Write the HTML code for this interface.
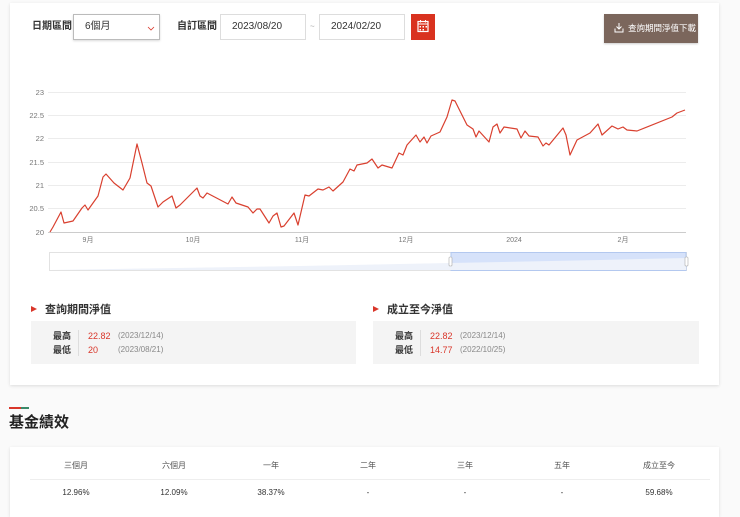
<!DOCTYPE html>
<html><head><meta charset="utf-8"><style>
body{margin:0;width:740px;height:510px;background:#fafafa;font-family:"Liberation Sans","Noto Sans CJK TC",sans-serif;position:relative;overflow:hidden;color:#333}
.abs{position:absolute}
.card{position:absolute;background:#fff;box-shadow:0 1px 3px rgba(0,0,0,.12);}
.lbl{font-size:10px;font-weight:bold;color:#333;line-height:14px}
.inp{position:absolute;border:1px solid #ddd;background:#fff;font-size:10px;line-height:24px;padding-left:11px;box-sizing:border-box;height:26px;color:#333}
.box{position:absolute;background:#f4f4f4;height:43px;top:321px}
.st{font-size:9px;line-height:14px}
.r{color:#d9362a}.g{color:#888}
.h{font-size:11px;font-weight:bold;line-height:14px}
.col{position:absolute;width:80px;text-align:center;font-size:8px;line-height:12px}
</style></head><body>
<div class="card" style="left:10px;top:3px;width:709px;height:382px"></div>
<div class="abs lbl" style="left:32px;top:20px">日期區間</div>
<div class="inp" style="left:73px;top:14px;width:87px;border-color:#bbb;box-shadow:0 1px 2px rgba(0,0,0,.15)">6個月<svg class="abs" style="left:73px;top:11px" width="8" height="6"><path d="M1 1L4 4L7 1" fill="none" stroke="#d9362a" stroke-width="0.8"/></svg></div>
<div class="abs lbl" style="left:177px;top:20px">自訂區間</div>
<div class="inp" style="left:220px;top:14px;width:86px">2023/08/20</div>
<div class="abs" style="left:310px;top:22px;font-size:8px;color:#aaa;line-height:10px">~</div>
<div class="inp" style="left:319px;top:14px;width:86px">2024/02/20</div>
<div class="abs" style="left:411px;top:14px;width:24px;height:26px;background:#d9321f">
<svg width="24" height="26"><rect x="7" y="7.5" width="10" height="10" fill="none" stroke="#fff" stroke-width="1.2"/><line x1="7" y1="10" x2="17" y2="10" stroke="#fff"/><line x1="9.5" y1="6" x2="9.5" y2="8.5" stroke="#fff"/><line x1="14.5" y1="6" x2="14.5" y2="8.5" stroke="#fff"/><g fill="#fff"><rect x="8.5" y="12" width="1.5" height="1.5"/><rect x="11.5" y="12" width="1.5" height="1.5"/><rect x="14.5" y="12" width="1.5" height="1.5"/><rect x="8.5" y="15" width="1.5" height="1.5"/><rect x="11.5" y="15" width="1.5" height="1.5"/></g></svg></div>
<div class="abs" style="left:604px;top:14px;width:94px;height:29px;background:#7b665c;color:#fff;font-size:8.5px;line-height:29px;box-shadow:0 1px 2px rgba(0,0,0,.2)">
<svg class="abs" style="left:9px;top:8px" width="12" height="12"><path d="M6 1V7M3.5 4.5L6 7L8.5 4.5M2 6.5V10H10V6.5" fill="none" stroke="#fff" stroke-width="1"/></svg><span style="position:absolute;left:24px">查詢期間淨值下載</span></div>

<svg class="abs" style="left:0;top:0" width="740" height="290">
<g stroke="#ececec" stroke-width="1"><line x1="48" y1="92.5" x2="686" y2="92.5"/><line x1="48" y1="115.5" x2="686" y2="115.5"/><line x1="48" y1="138.5" x2="686" y2="138.5"/><line x1="48" y1="162.5" x2="686" y2="162.5"/><line x1="48" y1="185.5" x2="686" y2="185.5"/><line x1="48" y1="208.5" x2="686" y2="208.5"/></g>
<line x1="48" y1="232.5" x2="686" y2="232.5" stroke="#ccc"/>
<g font-size="7.5" fill="#777" text-anchor="end" font-family="Liberation Sans"><text x="44" y="95">23</text><text x="44" y="118">22.5</text><text x="44" y="141">22</text><text x="44" y="165">21.5</text><text x="44" y="188">21</text><text x="44" y="211">20.5</text><text x="44" y="235">20</text></g>
<g font-size="7" fill="#777" text-anchor="middle" font-family="Liberation Sans,Noto Sans CJK TC"><text x="88" y="242">9月</text><text x="193" y="242">10月</text><text x="302" y="242">11月</text><text x="406" y="242">12月</text><text x="514" y="242">2024</text><text x="623" y="242">2月</text></g>
<polyline fill="none" stroke="#d9402f" stroke-width="1.2" stroke-linejoin="round" points="50,232 53,227 61,212 64,223 73,221 82,208 85,205 88,210 98,196 103,177 106,174 114,183 123,190 130,178 137,144 142,163 147,183 151,186 158,207 163,202 172,196 176,208 180,205 197,188 200,196 203,198 207,193 228,204 232,197 236,203 248,207 253,213 257,209 260,209 269,223 273,216 277,213 281,227 284,226 294,213 298,225 305,195 309,196 318,189 323,190 329,187 333,191 343,182 350,169 354,171 357,165 367,163 372,159 378,168 382,165 392,168 399,153 403,155 407,145 416,135 420,142 424,137 427,143 431,136 440,132 447,117 452,100 455,101 467,125 473,129 476,137 479,131 489,142 493,127 497,124 500,133 504,127 517,129 521,138 525,131 529,136 538,137 543,146 546,143 549,145 563,128 566,135 570,155 577,140 590,133 598,124 602,135 612,126 618,129 623,127 627,130 637,131 672,117 677,113 685,110"/>
<rect x="49.5" y="252.5" width="637" height="18" fill="#fff" stroke="#e2e2e2"/>
<rect x="451" y="252.5" width="235" height="18" fill="#d6e2fa" stroke="#b3c8ef"/>
<path d="M50 270 L300 266 L450 263 L600 260 L686 258 L686 270Z" fill="#eef2fa"/>
<rect x="449" y="257" width="3" height="9" rx="1" fill="#fff" stroke="#aaa" stroke-width=".6"/>
<rect x="685" y="257" width="3" height="9" rx="1" fill="#fff" stroke="#aaa" stroke-width=".6"/>
</svg>

<div class="abs" style="left:31px;top:306px;width:0;height:0;border-left:6px solid #d9362a;border-top:3.5px solid transparent;border-bottom:3.5px solid transparent"></div>
<div class="abs h" style="left:45px;top:303px">查詢期間淨值</div>
<div class="abs" style="left:373px;top:306px;width:0;height:0;border-left:6px solid #d9362a;border-top:3.5px solid transparent;border-bottom:3.5px solid transparent"></div>
<div class="abs h" style="left:387px;top:303px">成立至今淨值</div>
<div class="box" style="left:31px;width:325px">
<div class="abs st" style="left:22px;top:8px;font-weight:bold">最高<br>最低</div>
<div class="abs" style="left:47px;top:9px;width:1px;height:26px;background:#ddd"></div>
<div class="abs st r" style="left:57px;top:8px">22.82<br>20</div>
<div class="abs st g" style="left:87px;top:8px;font-size:8px">(2023/12/14)<br>(2023/08/21)</div></div>
<div class="box" style="left:373px;width:326px">
<div class="abs st" style="left:22px;top:8px;font-weight:bold">最高<br>最低</div>
<div class="abs" style="left:47px;top:9px;width:1px;height:26px;background:#ddd"></div>
<div class="abs st r" style="left:57px;top:8px">22.82<br>14.77</div>
<div class="abs st g" style="left:87px;top:8px;font-size:8px">(2023/12/14)<br>(2022/10/25)</div></div>

<div class="abs" style="left:9px;top:407px;width:12px;height:2px;background:#d9362a"></div>
<div class="abs" style="left:21px;top:407px;width:8px;height:2px;background:#3a8a6a"></div>
<div class="abs" style="left:9px;top:413px;font-size:15px;font-weight:bold;color:#222;line-height:20px">基金績效</div>

<div class="card" style="left:10px;top:447px;width:709px;height:70px"></div>
<div class="abs" style="left:30px;top:479px;width:680px;height:1px;background:#eee"></div>
<div class="col" style="left:36px;top:460px;color:#555">三個月</div>
<div class="col" style="left:134px;top:460px;color:#555">六個月</div>
<div class="col" style="left:231px;top:460px;color:#555">一年</div>
<div class="col" style="left:328px;top:460px;color:#555">二年</div>
<div class="col" style="left:425px;top:460px;color:#555">三年</div>
<div class="col" style="left:522px;top:460px;color:#555">五年</div>
<div class="col" style="left:619px;top:460px;color:#555">成立至今</div>
<div class="col" style="left:36px;top:487px">12.96%</div>
<div class="col" style="left:134px;top:487px">12.09%</div>
<div class="col" style="left:231px;top:487px">38.37%</div>
<div class="col" style="left:328px;top:487px">-</div>
<div class="col" style="left:425px;top:487px">-</div>
<div class="col" style="left:522px;top:487px">-</div>
<div class="col" style="left:619px;top:487px">59.68%</div>
</body></html>
